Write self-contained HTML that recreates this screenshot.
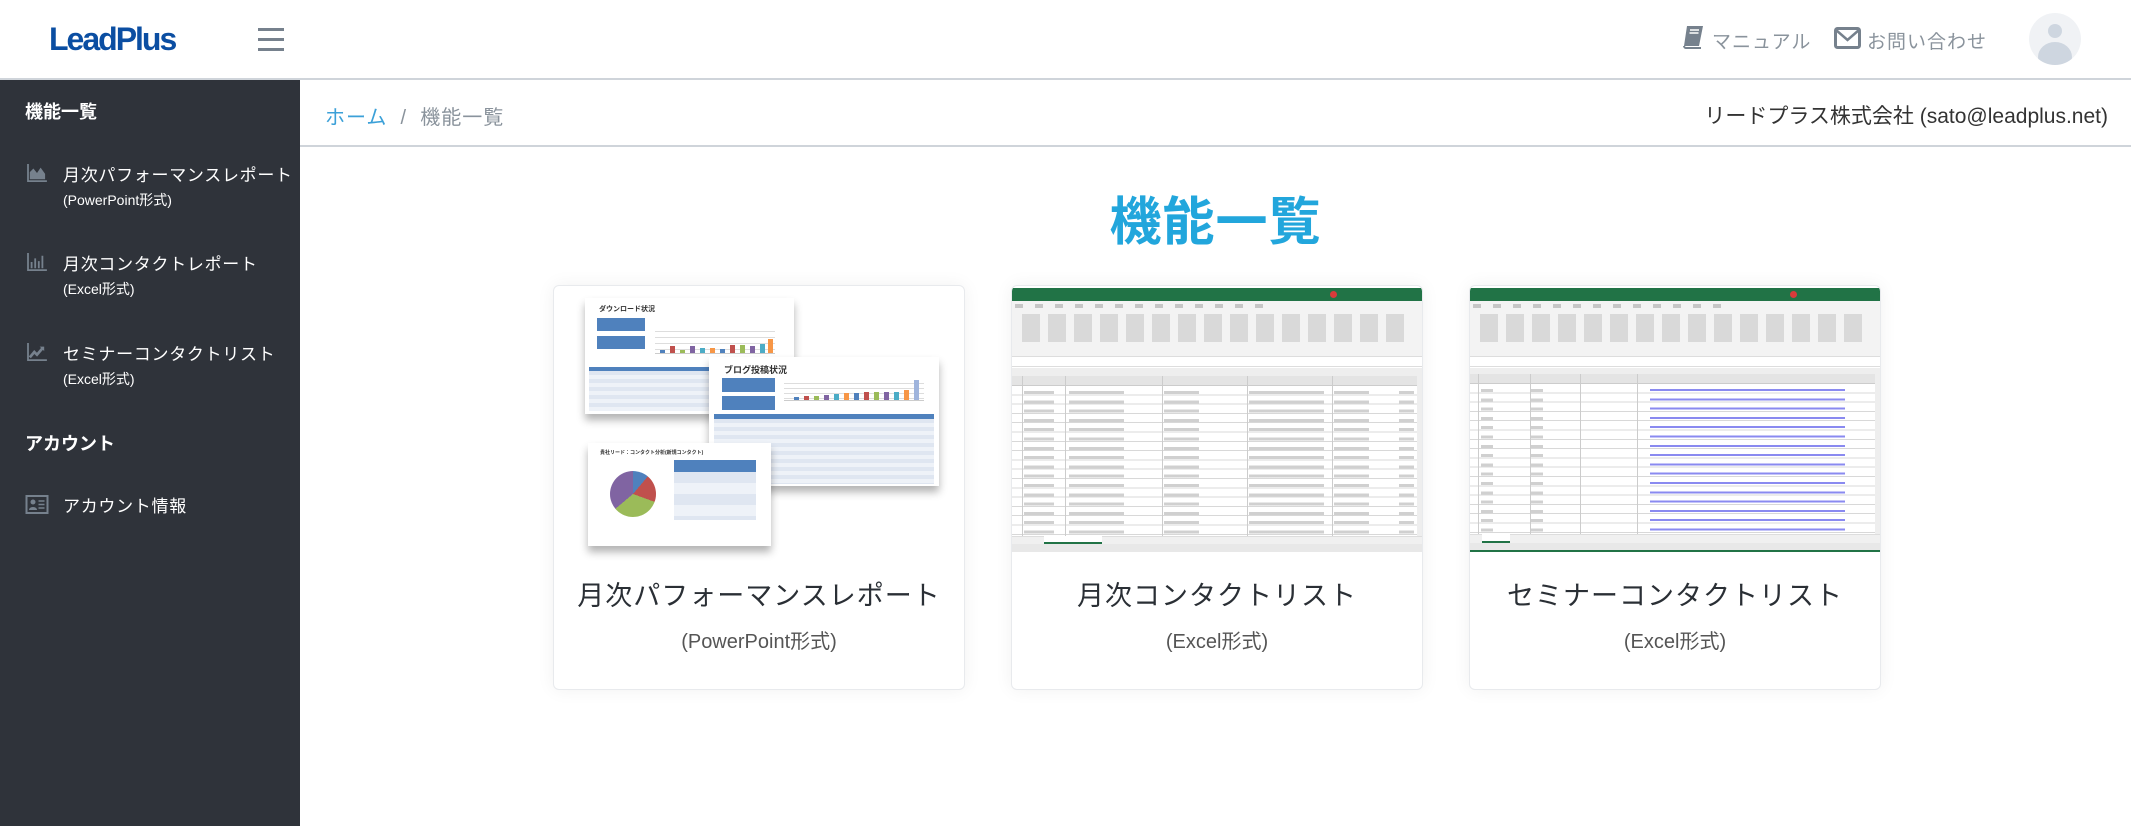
<!DOCTYPE html>
<html><head><meta charset="utf-8">
<style>
*{margin:0;padding:0;box-sizing:border-box}
body{width:2131px;height:826px;overflow:hidden;background:#fff;font-family:"Liberation Sans","Noto Sans CJK JP",sans-serif;position:relative}
.abs{position:absolute}
#hdr{left:0;top:0;width:2131px;height:80px;background:#fff;border-bottom:2px solid #cfd4da}
#side{left:0;top:80px;width:300px;height:746px;background:#2f333a;color:#fff}
.sh{position:absolute;left:25px;font-size:18px;font-weight:bold}
.si{position:absolute;left:63px;font-size:17px;letter-spacing:0.7px;white-space:nowrap}
.ss{position:absolute;left:63px;font-size:14px;white-space:nowrap}
.ic{position:absolute;left:25px}
.card{position:absolute;top:285px;width:412px;height:405px;border:1px solid #e8eaed;border-radius:6px;background:#fff;box-shadow:0 0 18px rgba(0,0,0,.06);overflow:hidden}
.ct{position:absolute;left:0;width:100%;text-align:center;top:288px;font-size:27px;color:#2a2f35;letter-spacing:1px}
.cs{position:absolute;left:0;width:100%;text-align:center;top:339px;font-size:20px;color:#555}
.xl{position:absolute;left:0;top:2px;width:412px;height:264px;background:#fff}
.slide{position:absolute;background:#fff;box-shadow:0 6px 8px rgba(0,0,0,.3)}
.bar{position:absolute;bottom:0;width:5px}
</style></head><body>

<div id="hdr" class="abs">
  <div class="abs" style="left:49px;top:21px;font-size:32px;font-weight:bold;color:#0b4ea2;letter-spacing:-2px">LeadPlus</div>
  <div class="abs" style="left:258px;top:28px;width:26px;height:3px;background:#76818d;box-shadow:0 10px 0 #76818d,0 20px 0 #76818d"></div>
  <svg class="abs" style="left:1681px;top:25px" width="24" height="24" viewBox="0 0 24 24"><path d="M6 1h16l-4 20H3z" fill="#76818d"/><path d="M3 21c0 1 1 2 2 2h15" stroke="#76818d" stroke-width="2" fill="none"/><path d="M9 5h9M8.5 8h9" stroke="#fff" stroke-width="1.5"/></svg>
  <div class="abs" style="left:1712px;top:27px;font-size:19px;color:#8a939c;letter-spacing:1px">マニュアル</div>
  <svg class="abs" style="left:1834px;top:27px" width="27" height="22" viewBox="0 0 27 22"><rect x="1.5" y="1.5" width="24" height="19" rx="2" fill="none" stroke="#76818d" stroke-width="3"/><path d="M2 3l11.5 10L25 3" fill="none" stroke="#76818d" stroke-width="2.5"/></svg>
  <div class="abs" style="left:1867px;top:27px;font-size:19px;color:#8a939c;letter-spacing:1px">お問い合わせ</div>
  <div class="abs" style="left:2029px;top:13px;width:52px;height:52px;border-radius:50%;background:#f0f2f5;overflow:hidden">
    <div class="abs" style="left:19px;top:11px;width:14px;height:14px;border-radius:50%;background:#ced6e0"></div>
    <div class="abs" style="left:9px;top:29px;width:34px;height:30px;border-radius:50%;background:#ced6e0"></div>
  </div>
</div>

<div id="side" class="abs">
  <div class="sh" style="top:18px">機能一覧</div>
  <svg class="ic" style="top:84px" width="24" height="18" viewBox="0 0 22 20"><path d="M1 0v19h21" stroke="#76818d" stroke-width="2" fill="none"/><path d="M3 17V9l4-4 4 5 4-6 5 7v6z" fill="#76818d"/></svg>
  <div class="si" style="top:81px">月次パフォーマンスレポート</div>
  <div class="ss" style="top:110px">(PowerPoint形式)</div>
  <svg class="ic" style="top:173px" width="24" height="18" viewBox="0 0 22 20"><path d="M1 0v19h21" stroke="#76818d" stroke-width="2" fill="none"/><path d="M4 10h2v7H4zM8 6h2v11H8zM12 9h2v8h-2zM16 3h2v14h-2z" fill="#76818d"/></svg>
  <div class="si" style="top:170px">月次コンタクトレポート</div>
  <div class="ss" style="top:199px">(Excel形式)</div>
  <svg class="ic" style="top:263px" width="24" height="18" viewBox="0 0 22 20"><path d="M1 0v19h21" stroke="#76818d" stroke-width="2" fill="none"/><path d="M3 16l5-6 3 3 6-7" stroke="#76818d" stroke-width="3" fill="none"/><path d="M14 4h5v5z" fill="#76818d"/></svg>
  <div class="si" style="top:260px">セミナーコンタクトリスト</div>
  <div class="ss" style="top:289px">(Excel形式)</div>
  <div class="sh" style="top:350px">アカウント</div>
  <svg class="ic" style="top:415px" width="24" height="19" viewBox="0 0 23 19"><rect x="1" y="1" width="21" height="17" fill="none" stroke="#76818d" stroke-width="2"/><circle cx="7.5" cy="7" r="2.5" fill="#76818d"/><path d="M3.5 15c0-4 8-4 8 0z" fill="#76818d"/><path d="M13 6h6M13 9.5h6M13 13h6" stroke="#76818d" stroke-width="1.5"/></svg>
  <div class="si" style="top:412px">アカウント情報</div>
</div>

<div class="abs" style="left:300px;top:80px;width:1831px;height:67px;border-bottom:2px solid #cfd4da">
  <div class="abs" style="left:25px;top:21px;font-size:20px;color:#8a939c;letter-spacing:1px"><span style="color:#3ba0d8">ホーム</span>&nbsp;&nbsp;/&nbsp;&nbsp;機能一覧</div>
  <div class="abs" style="right:23px;top:20px;font-size:21px;color:#333">リードプラス株式会社 (sato@leadplus.net)</div>
</div>

<div class="abs" style="left:300px;top:180px;width:1831px;text-align:center;font-size:52px;font-weight:bold;color:#22a6dc;letter-spacing:1px">機能一覧</div>

<!-- card1 -->
<div class="card" style="left:553px">
  <div class="slide" style="left:31px;top:12px;width:209px;height:116px">
    <div class="abs" style="left:14px;top:6px;font-size:7px;font-weight:bold;color:#333">ダウンロード状況</div>
    <div class="abs" style="left:12px;top:20px;width:48px;height:13px;background:#4f81bd"></div>
    <div class="abs" style="left:12px;top:38px;width:48px;height:13px;background:#4f81bd"></div>
    <div class="abs" style="left:70px;top:28px;width:120px;height:28px;border-bottom:1px solid #ccc;background:repeating-linear-gradient(#fff 0 5px,#ddd 5px 6px)">
      <div class="bar" style="left:5px;height:3px;background:#4f81bd"></div><div class="bar" style="left:15px;height:7px;background:#c0504d"></div><div class="bar" style="left:25px;height:3px;background:#9bbb59"></div><div class="bar" style="left:35px;height:7px;background:#8064a2"></div><div class="bar" style="left:45px;height:5px;background:#4bacc6"></div><div class="bar" style="left:55px;height:5px;background:#f79646"></div><div class="bar" style="left:65px;height:4px;background:#4f81bd"></div><div class="bar" style="left:75px;height:8px;background:#c0504d"></div><div class="bar" style="left:85px;height:8px;background:#9bbb59"></div><div class="bar" style="left:95px;height:7px;background:#8064a2"></div><div class="bar" style="left:105px;height:9px;background:#4bacc6"></div><div class="bar" style="left:113px;height:14px;background:#f79646"></div>
    </div>
    <div class="abs" style="left:4px;top:69px;width:140px;height:44px;background:repeating-linear-gradient(#dfe6f1 0 4px,#eef2f8 4px 8px);border-top:4px solid #4f81bd"></div>
  </div>
  <div class="slide" style="left:155px;top:71px;width:230px;height:129px">
    <div class="abs" style="left:15px;top:6px;font-size:9px;font-weight:bold;color:#333">ブログ投稿状況</div>
    <div class="abs" style="left:13px;top:21px;width:53px;height:14px;background:#4f81bd"></div>
    <div class="abs" style="left:13px;top:39px;width:53px;height:14px;background:#4f81bd"></div>
    <div class="abs" style="left:75px;top:22px;width:140px;height:22px;border-bottom:1px solid #ccc;background:repeating-linear-gradient(#fff 0 4px,#ddd 4px 5px)">
      <div class="bar" style="left:10px;height:3px;background:#4f81bd"></div><div class="bar" style="left:20px;height:4px;background:#c0504d"></div><div class="bar" style="left:30px;height:4px;background:#9bbb59"></div><div class="bar" style="left:40px;height:5px;background:#8064a2"></div><div class="bar" style="left:50px;height:6px;background:#4bacc6"></div><div class="bar" style="left:60px;height:7px;background:#f79646"></div><div class="bar" style="left:70px;height:7px;background:#4f81bd"></div><div class="bar" style="left:80px;height:8px;background:#c0504d"></div><div class="bar" style="left:90px;height:8px;background:#9bbb59"></div><div class="bar" style="left:100px;height:8px;background:#8064a2"></div><div class="bar" style="left:110px;height:8px;background:#4bacc6"></div><div class="bar" style="left:120px;height:10px;background:#f79646"></div><div class="bar" style="left:130px;height:20px;background:#9fb4dc"></div>
    </div>
    <div class="abs" style="left:5px;top:57px;width:220px;height:70px;background:repeating-linear-gradient(#dfe6f1 0 4px,#eef2f8 4px 8px);border-top:5px solid #4f81bd"></div>
  </div>
  <div class="slide" style="left:34px;top:157px;width:183px;height:103px">
    <div class="abs" style="left:12px;top:6px;font-size:5px;font-weight:bold;color:#333">貴社リード：コンタクト分析(新規コンタクト)</div>
    <div class="abs" style="left:22px;top:28px;width:46px;height:46px;border-radius:50%;background:conic-gradient(#4f81bd 0 40deg,#c0504d 40deg 110deg,#9bbb59 110deg 230deg,#8064a2 230deg 360deg)"></div>
    <div class="abs" style="left:86px;top:17px;width:82px;height:60px;background:repeating-linear-gradient(#dfe6f1 0 11px,#eef2f8 11px 22px);border-top:12px solid #4f81bd"></div>
  </div>
  <div class="ct">月次パフォーマンスレポート</div>
  <div class="cs">(PowerPoint形式)</div>
</div>

<!-- card2 -->
<div class="card" style="left:1011px">
  <div class="xl">
    <div class="abs" style="left:0;top:0;width:412px;height:13px;background:#217346"></div>
    <div class="abs" style="left:318px;top:3px;width:7px;height:7px;border-radius:50%;background:#d83b3b"></div>
    <div class="abs" style="left:0;top:13px;width:412px;height:56px;background:#f3f3f3;border-bottom:1px solid #ddd"></div>
    <div class="abs" style="left:3px;top:16px;width:260px;height:4px;background:repeating-linear-gradient(90deg,#999 0 8px,transparent 8px 20px);opacity:.5"></div>
    <div class="abs" style="left:10px;top:26px;width:390px;height:28px;background:repeating-linear-gradient(90deg,#c8c8c8 0 18px,transparent 18px 26px);opacity:.6"></div>
    <div class="abs" style="left:0;top:69px;width:412px;height:10px;background:#fff;border-bottom:1px solid #ddd"></div>
    <div class="abs" style="left:0;top:80px;width:412px;height:8px;background:#eee"></div>
    <div class="abs" style="left:0;top:88px;width:405px;height:10px;background:#e4e4e4;border-bottom:1px solid #ccc"></div>
    <div class="abs" style="left:0;top:98px;width:405px;height:150px;background:repeating-linear-gradient(#fff 0 8.3px,#d8d8d8 8.3px 9.3px)"></div>
    <div class="abs" style="left:0;top:88px;width:405px;height:160px;background:linear-gradient(90deg,transparent 10px,#ccc 10px 11px,transparent 11px 53px,#ccc 53px 54px,transparent 54px 150px,#ccc 150px 151px,transparent 151px 235px,#ccc 235px 236px,transparent 236px 320px,#ccc 320px 321px,transparent 321px)"></div>
    <div class="abs" style="left:12px;top:100px;width:390px;height:146px;background:repeating-linear-gradient(transparent 0 3px,rgba(120,120,120,.35) 3px 6px,transparent 6px 9.3px);-webkit-mask:linear-gradient(90deg,#000 0 30px,transparent 30px 45px,#000 45px 100px,transparent 100px 140px,#000 140px 175px,transparent 175px 225px,#000 225px 300px,transparent 300px 310px,#000 310px 345px,transparent 345px 375px,#000 375px)"></div>
    <div class="abs" style="left:405px;top:88px;width:7px;height:160px;background:#eee"></div>
    <div class="abs" style="left:0;top:248px;width:412px;height:8px;background:#f0f0f0;border-top:1px solid #ddd"></div>
    <div class="abs" style="left:32px;top:248px;width:58px;height:8px;background:#fff;border-bottom:2px solid #217346"></div>
    <div class="abs" style="left:0;top:256px;width:412px;height:8px;background:#e8e8e8"></div>
  </div>
  <div class="ct">月次コンタクトリスト</div>
  <div class="cs">(Excel形式)</div>
</div>

<!-- card3 -->
<div class="card" style="left:1469px">
  <div class="xl">
    <div class="abs" style="left:0;top:0;width:412px;height:13px;background:#217346"></div>
    <div class="abs" style="left:320px;top:3px;width:7px;height:7px;border-radius:50%;background:#d83b3b"></div>
    <div class="abs" style="left:0;top:13px;width:412px;height:56px;background:#f3f3f3;border-bottom:1px solid #ddd"></div>
    <div class="abs" style="left:3px;top:16px;width:260px;height:4px;background:repeating-linear-gradient(90deg,#999 0 8px,transparent 8px 20px);opacity:.5"></div>
    <div class="abs" style="left:10px;top:26px;width:390px;height:28px;background:repeating-linear-gradient(90deg,#c8c8c8 0 18px,transparent 18px 26px);opacity:.6"></div>
    <div class="abs" style="left:0;top:69px;width:412px;height:10px;background:#fff;border-bottom:1px solid #ddd"></div>
    <div class="abs" style="left:0;top:80px;width:412px;height:6px;background:#eee"></div>
    <div class="abs" style="left:0;top:86px;width:405px;height:10px;background:#e4e4e4;border-bottom:1px solid #ccc"></div>
    <div class="abs" style="left:0;top:96px;width:405px;height:150px;background:repeating-linear-gradient(#fff 0 8.3px,#d8d8d8 8.3px 9.3px)"></div>
    <div class="abs" style="left:0;top:86px;width:405px;height:160px;background:linear-gradient(90deg,transparent 8px,#ccc 8px 9px,transparent 9px 60px,#ccc 60px 61px,transparent 61px 110px,#ccc 110px 111px,transparent 111px 167px,#ccc 167px 168px,transparent 168px)"></div>
    <div class="abs" style="left:180px;top:98px;width:195px;height:146px;background:repeating-linear-gradient(transparent 0 3px,rgba(60,60,230,.6) 3px 5px,transparent 5px 9.3px)"></div>
    <div class="abs" style="left:11px;top:98px;width:80px;height:146px;background:repeating-linear-gradient(transparent 0 3px,rgba(120,120,120,.35) 3px 6px,transparent 6px 9.3px);-webkit-mask:linear-gradient(90deg,#000 0 12px,transparent 12px 50px,#000 50px 62px,transparent 62px)"></div>
    <div class="abs" style="left:405px;top:86px;width:7px;height:160px;background:#eee"></div>
    <div class="abs" style="left:0;top:246px;width:412px;height:9px;background:#f0f0f0;border-top:1px solid #ddd"></div>
    <div class="abs" style="left:12px;top:246px;width:28px;height:9px;background:#fff;border-bottom:2px solid #217346"></div>
    <div class="abs" style="left:0;top:255px;width:412px;height:9px;background:#e8e8e8;border-bottom:2px solid #217346"></div>
  </div>
  <div class="ct">セミナーコンタクトリスト</div>
  <div class="cs">(Excel形式)</div>
</div>

</body></html>
